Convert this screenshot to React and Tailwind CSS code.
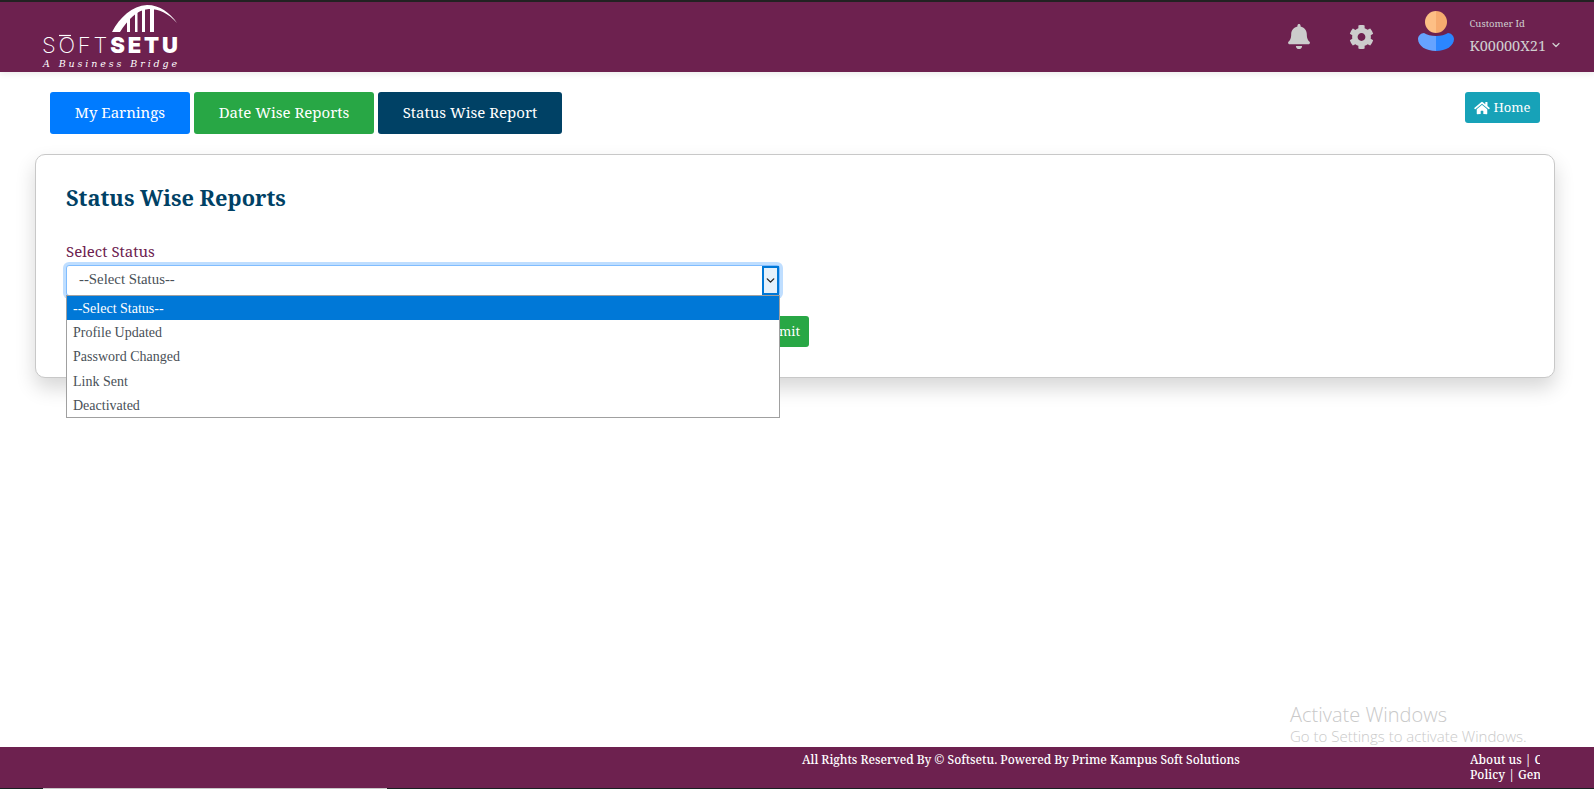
import React from 'react';
import { FaBell, FaCog, FaHome } from 'react-icons/fa';
import { ChevronDown } from 'lucide-react';

const serif = "font-['Noto_Serif','Liberation_Serif',serif]";

const Logo = () => (
    <div className="relative w-[136px] h-[66px] text-white">
        <svg className="absolute left-0 top-0" width="136" height="34" viewBox="0 0 136 34" fill="none">
            <path d="M70 28 C78 13 90 2 105 1 C118 1 128 9 135 19 C126 9 117 5 107 5 C94 6 86 16 78 28 Z" fill="#fff" />
            <rect x="85" y="13" width="3" height="15" fill="#fff" />
            <rect x="93" y="7" width="2.5" height="21" fill="#fff" />
            <rect x="100" y="4" width="3" height="24" fill="#fff" />
            <rect x="108" y="3" width="4" height="25" fill="#fff" />
            <path d="M17 31.5 L29 31.5" stroke="#fff" strokeWidth="1.2" />
        </svg>
        <div className="absolute left-0 top-[30px] flex items-baseline text-[22px] leading-[22px] font-['Inter',sans-serif]">
            <span className="font-extralight tracking-[2.8px]">SOFT</span>
            <span className="font-black tracking-[2.9px]">SETU</span>
        </div>
        <div className="absolute left-[1px] top-[54px] text-[9.5px] leading-[11px] italic tracking-[2.9px] whitespace-nowrap font-['DejaVu_Serif',serif]">A Business Bridge</div>
    </div>
);

const Avatar = () => (
    <svg width="36" height="41" viewBox="0 0 36 41">
        <path d="M18 40 C8 40 0 35 0 28 C0 25 3 22 6 22 C9 24 13 25 18 25 Z" fill="#66a3ff" />
        <path d="M18 40 C28 40 36 35 36 28 C36 25 33 22 30 22 C27 24 23 25 18 25 Z" fill="#2b86ff" />
        <path d="M18 0 a11 11 0 0 0 0 22 Z" fill="#fdbf85" />
        <path d="M18 0 a11 11 0 0 1 0 22 Z" fill="#f6ab6f" />
    </svg>
);

const Tab = ({ color, width, children }) => (
    <button className={`h-[42px] pb-[2px] rounded-[3px] text-white text-[15px] ${width} ${color}`}>{children}</button>
);

const options = ['Profile Updated', 'Password Changed', 'Link Sent', 'Deactivated'];

export default function App() {
    return (
        <div className={`relative h-[789px] flex flex-col overflow-hidden bg-white ${serif}`}>
            <header className="h-[72px] shrink-0 flex items-start justify-between bg-[#6d214f] border-t-2 border-[#222] shadow-[0_2px_6px_rgba(0,0,0,0.08)]">
                <div className="ml-[42px] mt-[2px]"><Logo /></div>
                <div className="flex items-start text-[#cfcfcf] mr-[32px]">
                    <FaBell className="mt-[22px] w-[22px] h-[25px] text-[#cccccc]" />
                    <FaCog className="mt-[22px] ml-[39px] w-[25px] h-[26px] text-[#cccccc]" />
                    <div className="mt-[9px] ml-[44px]"><Avatar /></div>
                    <div className="ml-[16px] mt-[16px]">
                        <div className="text-[9.5px] leading-[12px]">Customer Id</div>
                        <div className="mt-[5px] flex items-center text-[14.5px] leading-[20px]">
                            K00000X21
                            <ChevronDown className="ml-[4px] w-[12px] h-[12px]" strokeWidth={2.5} />
                        </div>
                    </div>
                </div>
            </header>

            <main className="flex-1 relative">
                <div className="flex items-start justify-between pl-[50px] pr-[54px] pt-[20px]">
                    <div className="flex gap-[4px]">
                        <Tab width="w-[140px]" color="bg-[#007bff]">My Earnings</Tab>
                        <Tab width="w-[180px]" color="bg-[#28a745]">Date Wise Reports</Tab>
                        <Tab width="w-[184px]" color="bg-[#004165]">Status Wise Report</Tab>
                    </div>
                    <button className="h-[31px] w-[75px] justify-center rounded-[3px] bg-[#17a2b8] text-white text-[13px] flex items-center gap-[3px]">
                        <FaHome className="w-[16px] h-[14px]" /> Home
                    </button>
                </div>

                <section className="relative ml-[35px] mr-[39px] mt-[20px] h-[224px] px-[30px] border border-[#c8c8c8] rounded-[10px] bg-white shadow-[0_10px_20px_rgba(0,0,0,0.16)]">
                    <h2 className="pt-[28px] text-[21.8px] leading-[30px] font-bold text-[#004165]">Status Wise Reports</h2>
                    <label className="block mt-[28px] text-[15px] leading-[20px] text-[#6d214f]">Select Status</label>
                    <div className="relative w-[714px] mt-[4px] font-['Liberation_Serif',serif]">
                        <div className="h-[31px] pl-[12px] flex items-center text-[14.8px] text-[#495057] bg-white border border-[#80bdff] rounded-[3px] shadow-[0_0_0_3px_rgba(0,123,255,0.25)]">
                            <span className="pb-[2px]">--Select Status--</span>
                            <span className="ml-auto w-[17px] h-[29px] flex items-center justify-center border-2 border-[#0078d7] bg-[#e5f1fb] text-[#222]">
                                <ChevronDown className="w-[13px] h-[13px]" strokeWidth={2.5} />
                            </span>
                        </div>
                        <ul className="absolute z-10 left-0 top-[30px] w-[714px] border border-[#a0a0a0] bg-white text-[14px] text-[#495057]">
                            <li className="h-[24.3px] px-[6px] flex items-center bg-[#0078d7] text-white">--Select Status--</li>
                            {options.map((o) => (
                                <li key={o} className="h-[24.3px] px-[6px] flex items-center">{o}</li>
                            ))}
                        </ul>
                    </div>
                    <button className="absolute left-[700px] top-[161px] h-[31px] w-[73px] pr-[9px] rounded-[3px] bg-[#28a745] text-white text-[13px] text-right">Submit</button>
                </section>

                <div className="absolute left-[1290px] top-[631px] text-[#c9c9c9] font-['Open_Sans',sans-serif] font-light">
                    <div className="text-[20px] leading-[24px]">Activate Windows</div>
                    <div className="text-[15px] leading-[18px]">Go to Settings to activate Windows.</div>
                </div>
            </main>

            <footer className="h-[42px] shrink-0 relative bg-[#6d214f] border-b border-[#1a1f22] text-white text-[12px] leading-[15px]">
                <div className="absolute left-[43px] bottom-[-1px] w-[344px] h-px bg-[#c8c8c8]" />
                <div className="flex">
                    <div className="ml-[802px] mt-[5px] font-medium tracking-[-0.03px]">All Rights Reserved By © Softsetu. Powered By Prime Kampus Soft Solutions</div>
                    <div className="ml-auto mr-[54px] mt-[5px] w-[70px] h-[30px] overflow-hidden whitespace-nowrap font-medium">
                        <div>About us | Contact</div>
                        <div>Policy | General</div>
                    </div>
                </div>
            </footer>
        </div>
    );
}
